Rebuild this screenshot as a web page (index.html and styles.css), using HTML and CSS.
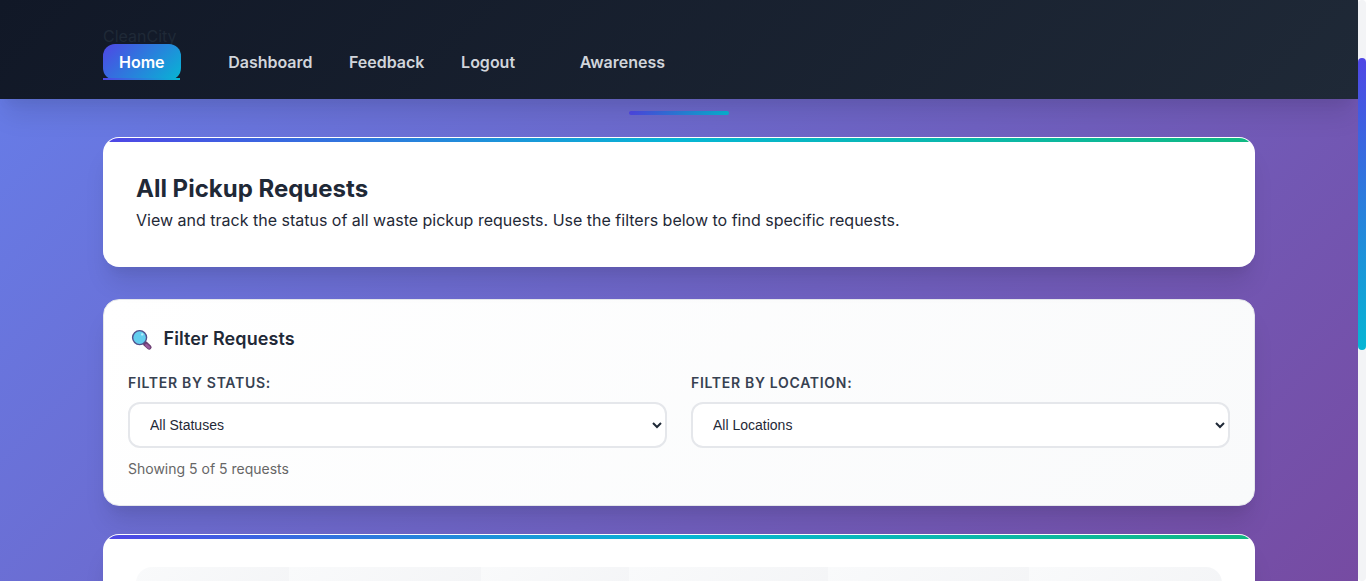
FILE: index.html
```html
<!DOCTYPE html>
<html lang="en">
<head>
<meta charset="utf-8">
<title>CleanCity</title>
<link rel="stylesheet" href="styles.css">
</head>
<body>
<div class="viewport">
  <div class="page">
    <header class="header">
      <div class="brand">CleanCity</div>
      <nav class="nav">
        <a class="link active">Home</a>
        <a class="link dashboard">Dashboard</a>
        <a class="link feedback">Feedback</a>
        <a class="link logout">Logout</a>
        <a class="link awareness">Awareness</a>
      </nav>
    </header>
    <main class="main">
      <div class="title-rule"></div>
      <section class="card intro">
        <h2 class="card-title">All Pickup Requests</h2>
        <p class="card-text">View and track the status of all waste pickup requests. Use the filters below to find specific requests.</p>
      </section>
      <section class="filters">
        <h3 class="filters-title">
          <svg class="search-icon" viewBox="0 0 22 22">
            <path d="M14.2 14.6l4 3.6" stroke="#6c3f72" stroke-width="4.8" stroke-linecap="round"/>
            <path d="M15.4 16.2l2.6 2.2" stroke="#9b5a9c" stroke-width="2.6" stroke-linecap="round"/>
            <circle cx="8.6" cy="8.6" r="7" fill="#62cdee" stroke="#50508c" stroke-width="1.4"/>
            <circle cx="11.2" cy="5.4" r="1.2" fill="#b4ecfb"/>
          </svg>
          <span>Filter Requests</span>
        </h3>
        <div class="filter-grid">
          <div class="field">
            <label class="label" for="status">Filter by Status:</label>
            <select class="select" id="status"><option>All Statuses</option></select>
          </div>
          <div class="field">
            <label class="label" for="location">Filter by Location:</label>
            <select class="select" id="location"><option>All Locations</option></select>
          </div>
        </div>
        <p class="count">Showing 5 of 5 requests</p>
      </section>
      <section class="card requests">
        <div class="table-head">
          <div class="th"></div><div class="th"></div><div class="th"></div>
          <div class="th"></div><div class="th"></div><div class="th"></div>
        </div>
      </section>
    </main>
  </div>
  <div class="scrollbar"><div class="thumb"></div></div>
</div>
</body>
</html>
```
FILE: styles.css
```css
* { box-sizing: border-box; margin: 0; padding: 0; }

body {
  font-family: Inter, "Liberation Sans", sans-serif;
  font-size: 16px;
  line-height: 1.6;
  color: #1f2937;
  overflow: hidden;
}

.viewport { display: flex; height: 581px; overflow: hidden; }

.page {
  flex: 1;
  min-width: 0;
  overflow: hidden;
  background: linear-gradient(135deg, #667eea 0%, #764ba2 100%);
}

.header {
  position: relative;
  height: 99px;
  padding: 24px 103px 0;
  background: linear-gradient(135deg, #111827, #1f2937);
  box-shadow: 0 20px 25px -5px rgba(0, 0, 0, .1), 0 10px 10px -5px rgba(0, 0, 0, .04);
}

.nav { display: flex; height: 24px; align-items: center; }

.link {
  position: relative;
  padding: 8px 16px;
  line-height: 20px;
  font-weight: 600;
  color: #d1d5db;
  border-radius: 12px;
}

.active { color: #fff; background: linear-gradient(135deg, #4f46e5, #06b6d4); }

.active::after {
  content: "";
  position: absolute;
  left: 0;
  right: 1px;
  bottom: 0;
  height: 2px;
  background: linear-gradient(90deg, #4f46e5, #06b6d4);
}

.dashboard { margin-left: 31.6px; }
.feedback { margin-left: 4.4px; }
.logout { margin-left: 4.6px; }
.awareness { margin-left: 32.6px; }

.main { padding: 12px 103px 0; }

.title-rule {
  width: 100px;
  height: 4px;
  margin: 0 auto 22px;
  border-radius: 2px;
  background: linear-gradient(90deg, #4f46e5, #06b6d4);
}

.card, .filters {
  border: 1px solid rgba(255, 255, 255, .9);
  border-radius: 16px;
  box-shadow: 0 20px 25px -5px rgba(0, 0, 0, .1), 0 10px 10px -5px rgba(0, 0, 0, .04);
}

.card { position: relative; overflow: hidden; padding: 32px; background: #fff; }

.card::before {
  content: "";
  position: absolute;
  top: 0;
  left: 0;
  right: 0;
  height: 4px;
  background: linear-gradient(90deg, #4f46e5, #06b6d4, #10b981);
}

.intro { height: 130px; margin-bottom: 32px; }

.card-title { font-size: 24px; line-height: 38px; font-weight: 700; }

.card-text { line-height: 24px; }

.filters {
  height: 207px;
  margin-bottom: 28px;
  padding: 24px;
  border-color: #e5e7eb;
  background: linear-gradient(135deg, #fff, #f9fafb);
}

.filters-title {
  display: flex;
  align-items: center;
  gap: 10.5px;
  height: 31px;
  padding-left: 3px;
  font-size: 18px;
  font-weight: 600;
  letter-spacing: .1px;
}

.search-icon { width: 22px; height: 22px; fill: none; }

.filter-grid { display: grid; grid-template-columns: 1fr 1fr; gap: 24px; margin-top: 17px; }

.label {
  display: block;
  height: 30px;
  font-size: 14px;
  line-height: 22px;
  font-weight: 600;
  letter-spacing: .7px;
  text-transform: uppercase;
  color: #374151;
}

.select {
  display: block;
  width: 100%;
  height: 46px;
  padding: 0 16px;
  border: 2px solid #e5e7eb;
  border-radius: 12px;
  background: #fff;
  color: #1f2937;
  font: 14px "Liberation Sans", sans-serif;
}

.count { margin-top: 10px; font-size: 14px; line-height: 22px; color: #666; }

.requests { height: 200px; }

.table-head {
  display: grid;
  grid-template-columns: 153px 192px 148px 199px 201px 1fr;
  height: 60px;
  border-radius: 16px;
  overflow: hidden;
}

.th { background: linear-gradient(135deg, #f9fafb, #f3f4f6); }

.scrollbar { width: 8px; padding-top: 58px; background: #f3f4f6; border-radius: 4px; }

.thumb { height: 292px; border-radius: 4px; background: linear-gradient(180deg, #4f46e5, #06b6d4); }
```
